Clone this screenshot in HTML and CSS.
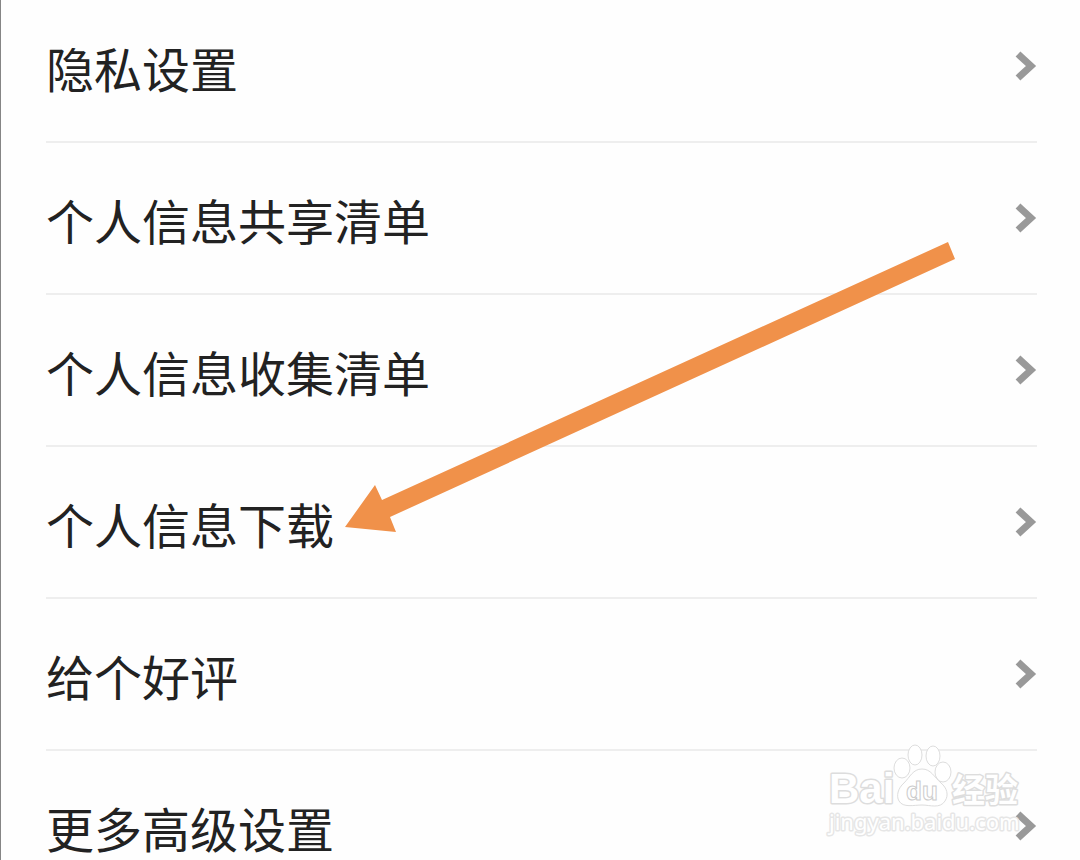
FILE: index.html
```html
<!DOCTYPE html>
<html lang="zh-CN">
<head>
    <meta charset="UTF-8">
    <meta name="viewport" content="width=device-width, initial-scale=1.0">
    <title>设置</title>
    <link rel="stylesheet" href="styles.css">
</head>
<body>
    <main class="screen">
        <nav class="list">
            <a class="row" href="#privacy">
                <span class="label">隐私设置</span>
                <svg class="chevron" viewBox="0 0 22 30"><path d="M3 3 L16 15 L3 27"/></svg>
            </a>
            <a class="row" href="#share-list">
                <span class="label">个人信息共享清单</span>
                <svg class="chevron" viewBox="0 0 22 30"><path d="M3 3 L16 15 L3 27"/></svg>
            </a>
            <a class="row" href="#collect-list">
                <span class="label">个人信息收集清单</span>
                <svg class="chevron" viewBox="0 0 22 30"><path d="M3 3 L16 15 L3 27"/></svg>
            </a>
            <a class="row" href="#download">
                <span class="label">个人信息下载</span>
                <svg class="chevron" viewBox="0 0 22 30"><path d="M3 3 L16 15 L3 27"/></svg>
            </a>
            <a class="row" href="#rate">
                <span class="label">给个好评</span>
                <svg class="chevron" viewBox="0 0 22 30"><path d="M3 3 L16 15 L3 27"/></svg>
            </a>
            <a class="row" href="#advanced">
                <span class="label">更多高级设置</span>
                <svg class="chevron" viewBox="0 0 22 30"><path d="M3 3 L16 15 L3 27"/></svg>
            </a>
        </nav>

        <!-- arrow pointing at the download row -->
        <svg class="arrow" viewBox="0 0 610 292">
            <path d="M0 285 L30 243 L37 258 L603 0 L610 17 L45 275 L51 290 Z"/>
        </svg>

        <svg class="watermark" viewBox="0 0 200 110">
            <text class="brand" x="9" y="63">Bai</text>
            <g class="paw">
                <ellipse cx="82" cy="28" rx="8" ry="10"/>
                <ellipse cx="95" cy="15" rx="7" ry="10"/>
                <ellipse cx="113" cy="16" rx="7" ry="10"/>
                <ellipse cx="123" cy="32" rx="8" ry="10"/>
                <path d="M102 29 C93 29 90 37 84 43 C78 48 76 56 79 61 C83 68 94 65 102 65 C110 65 120 69 125 61 C129 55 127 48 121 43 C114 37 111 29 102 29 Z"/>
            </g>
            <text class="du" x="86" y="60">du</text>
            <text class="cn" x="132" y="62">经验</text>
            <text class="url" x="9" y="90">jingyan.baidu.com</text>
        </svg>
    </main>
</body>
</html>
```
FILE: styles.css
```css
html { overflow: hidden; }
body { margin: 0; background: #fefefe; color: #222; font-family: "Noto Sans CJK SC", "Noto Sans", sans-serif; }
.screen { position: relative; box-sizing: border-box; height: 100vh; overflow: hidden; border-left: 1px solid #858585; padding: 0 43px 0 45px; }

/* the list is scrolled a little past its top */
.list { margin-top: -9px; }
.row { display: flex; align-items: center; justify-content: space-between; height: 150px; border-bottom: 2px solid #eee; color: inherit; text-decoration: none; }
.label { padding-top: 2px; font-size: 48px; line-height: 64px; }
.chevron { width: 22px; height: 30px; fill: none; stroke: #999; stroke-width: 7; }

.arrow { position: absolute; left: 344px; top: 242px; width: 610px; height: 292px; fill: #f0914a; }

.watermark { position: absolute; right: 60px; bottom: 10px; width: 200px; height: 110px; fill: #fff; stroke: #ddd; stroke-width: 1; overflow: visible; }
.brand, .cn, .url { paint-order: stroke; stroke-width: 3; stroke-linejoin: round; }
.brand { font: bold 42px "Liberation Sans", sans-serif; }
.du { font: bold 26px "Liberation Sans", sans-serif; stroke: #ccc; }
.cn { font: bold 33px "Noto Sans CJK SC", sans-serif; }
.url { font: 22px "Noto Sans", sans-serif; stroke: #e6e6e6; }
```
